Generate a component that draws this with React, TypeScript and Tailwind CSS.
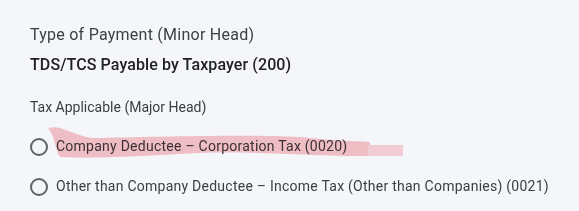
import React from 'react';

const options = [
  'Company Deductee – Corporation Tax (0020)',
  'Other than Company Deductee – Income Tax (Other than Companies) (0021)',
];

const Radio = ({ label }: { label: string }) => (
  <label className="flex items-center gap-[8px] text-[14px] tracking-[0.25px] text-[#3c4043]">
    <span className="w-[18px] h-[18px] rounded-full border-2 border-[#5f6368] shrink-0" />
    <span>{label}</span>
  </label>
);

export default function App() {
  return (
    <div
      className="relative w-[579px] h-[211px] bg-[#f5f6fa] pl-[30px] pt-[23px] overflow-hidden"
      style={{ fontFamily: 'Roboto, "Liberation Sans", sans-serif' }}
    >
      <div className="text-[16px] leading-[24px] tracking-[0.25px] text-[#3c4043]">Type of Payment (Minor Head)</div>
      <div className="mt-[6px] text-[16px] leading-[24px] tracking-[0.1px] font-medium text-[#202124]">
        TDS/TCS Payable by Taxpayer (200)
      </div>
      <div className="mt-[20px] text-[14px] leading-[20px] text-[#3c4043]">Tax Applicable (Major Head)</div>
      <div className="mt-[19px] flex flex-col gap-[19px]">
        {options.map(o => (
          <Radio key={o} label={o} />
        ))}
      </div>

      {/* highlighter mark */}
      <svg
        className="absolute left-0 top-0 pointer-events-none mix-blend-multiply"
        width="579"
        height="211"
        viewBox="0 0 579 211"
      >
        <path
          d="M48 128 C 60 124, 72 135, 92 138 C 150 137, 250 134, 300 137 C 330 140, 350 141, 370 142 L 370 156 C 330 157, 250 151, 200 153 C 140 156, 90 159, 60 157 C 55 150, 56 138, 48 128 Z"
          fill="#f9c4c8"
        />
        <rect x="368" y="145" width="35" height="11" fill="#fbd4d7" />
      </svg>
    </div>
  );
}
